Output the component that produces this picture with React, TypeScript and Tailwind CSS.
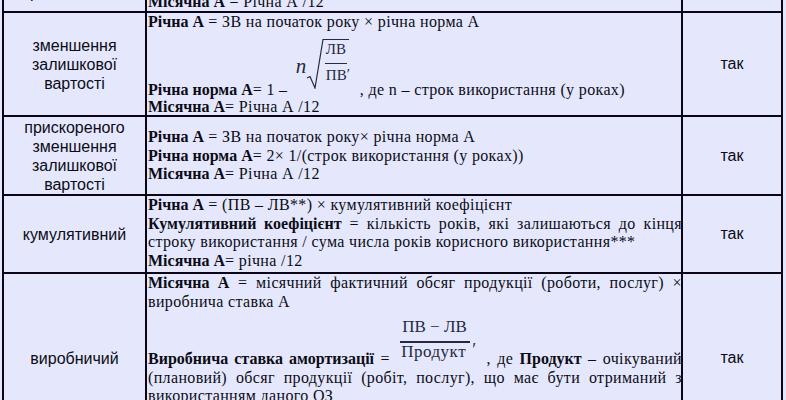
import React from 'react';

// Word-style table: depreciation methods, formulas, "так" column

const Line = ({ children, className = '' }: { children: React.ReactNode; className?: string }) => (
  <div className={`whitespace-nowrap ${className}`}>{children}</div>
);

const Just = ({ children }: { children: React.ReactNode }) => (
  <div className="text-justify [text-align-last:justify]">{children}</div>
);

const RootFormula = () => (
  <span className="relative inline-block h-[57px] w-[68px] overflow-hidden align-[6px] tracking-normal text-[#262a40]">
    <span className="absolute left-[4px] top-[24px] text-[21px] italic leading-none">n</span>
    <svg className="absolute left-0 top-0" width="68" height="57" viewBox="0 0 68 57" fill="none">
      <path d="M15 46 L18 44.5 L23 56 L31 7.5 L57 7.5" stroke="#262a40" strokeWidth="1.2" />
    </svg>
    <span className="absolute left-[34px] top-[10px] text-[15px] leading-none">ЛВ</span>
    <span className="absolute left-[33px] top-[31px] h-px w-[22px] bg-[#262a40]" />
    <span className="absolute left-[34px] top-[36px] text-[15px] leading-none">ПВ</span>
    <span className="absolute left-[55px] top-[35px] text-[15px] leading-none">′</span>
  </span>
);

const FracFormula = () => (
  <span className="relative inline-block h-[52px] w-[84px] overflow-hidden align-[1px] tracking-normal text-[#262a40]">
    <span className="absolute left-[6px] top-[7px] whitespace-nowrap text-[17px] leading-none">ПВ − ЛВ</span>
    <span className="absolute left-[4px] top-[30px] h-[2px] w-[70px] bg-[#262a40]" />
    <span className="absolute left-[5px] top-[32px] text-[17px] leading-none tracking-[0.5px]">Продукт</span>
    <span className="absolute left-[76px] top-[30px] text-[18px] leading-none">′</span>
  </span>
);

const leftCell =
  "flex flex-col items-center justify-center bg-[#e5e8fc] text-center font-['Liberation_Sans',Arial,sans-serif] text-[16px] leading-[19px]";
const midCell = "flex flex-col overflow-hidden bg-[#e5e8fc] pl-[1px]";
const midInner =
  "w-[534px] shrink-0 font-['Liberation_Serif','Times_New_Roman',serif] text-[16px] leading-[18.5px] tracking-[0.35px] [&_b]:tracking-normal";
const rightCell =
  "flex items-center justify-center bg-[#e5e8fc] font-['Liberation_Sans',Arial,sans-serif] text-[16px]";

export default function App() {
  return (
    <div className="h-[400px] w-[786px] overflow-hidden bg-[#e5e8fc] text-[#0c0c16]">
      <div className="ml-[2px] mt-[-30px] grid w-[781px] grid-cols-[141px_534px_98px] grid-rows-[39px_102px_77px_76px_168px] gap-[2px] bg-[#0b0515] p-[2px]">
        {/* row 1 (cut off at top) */}
        <div className={`${leftCell} !justify-end pb-[9px]`}>
          <div>прямолінійний</div>
        </div>
        <div className={`${midCell} justify-end`}>
          <div className={midInner}>
            <Line>
              <b>Річна А</b> = (ПВ – ЛВ) / строк корисного використання
            </Line>
            <Line>
              <b>Місячна А</b> = Річна А /12
            </Line>
          </div>
        </div>
        <div className={rightCell}>так</div>

        {/* row 2 */}
        <div className={leftCell}>
          <div>зменшення</div>
          <div>залишкової</div>
          <div>вартості</div>
        </div>
        <div className={`${midCell} justify-start`}>
          <div className={midInner}>
            <Line>
              <b>Річна А</b> = ЗВ на початок року × річна норма А
            </Line>
            <Line>
              <b>Річна норма А</b>= 1 – <RootFormula />, де n – строк використання (у роках)
            </Line>
            <Line className="-mt-px">
              <b>Місячна А</b>= Річна А /12
            </Line>
          </div>
        </div>
        <div className={rightCell}>так</div>

        {/* row 3 */}
        <div className={leftCell}>
          <div>прискореного</div>
          <div>зменшення</div>
          <div>залишкової</div>
          <div>вартості</div>
        </div>
        <div className={`${midCell} justify-start pt-[11px]`}>
          <div className={midInner}>
            <Line>
              <b>Річна А</b> = ЗВ на початок року× річна норма А
            </Line>
            <Line>
              <b>Річна норма А</b>= 2× 1/(строк використання (у роках))
            </Line>
            <Line>
              <b>Місячна А</b>= Річна А /12
            </Line>
          </div>
        </div>
        <div className={rightCell}>так</div>

        {/* row 4 */}
        <div className={leftCell}>
          <div>кумулятивний</div>
        </div>
        <div className={`${midCell} justify-start`}>
          <div className={midInner}>
            <Line>
              <b>Річна А</b> = (ПВ – ЛВ**) × кумулятивний коефіцієнт
            </Line>
            <Just>
              <b>Кумулятивний коефіцієнт</b> = кількість років, які залишаються до кінця
            </Just>
            <Line>строку використання / сума числа років корисного використання***</Line>
            <Line>
              <b>Місячна А</b>= річна /12
            </Line>
          </div>
        </div>
        <div className={rightCell}>так</div>

        {/* row 5 */}
        <div className={leftCell}>
          <div>виробничий</div>
        </div>
        <div className={`${midCell} justify-start`}>
          <div className={midInner}>
            <Just>
              <b>Місячна А</b> = місячний фактичний обсяг продукції (роботи, послуг) ×
            </Just>
            <Line>виробнича ставка А</Line>
            <Just>
              <b>Виробнича ставка амортизації</b> = <FracFormula /> , де <b>Продукт</b> – очікуваний
            </Just>
            <Just>(плановий) обсяг продукції (робіт, послуг), що має бути отриманий з</Just>
            <Line>використанням даного ОЗ</Line>
          </div>
        </div>
        <div className={rightCell}>так</div>
      </div>
    </div>
  );
}
